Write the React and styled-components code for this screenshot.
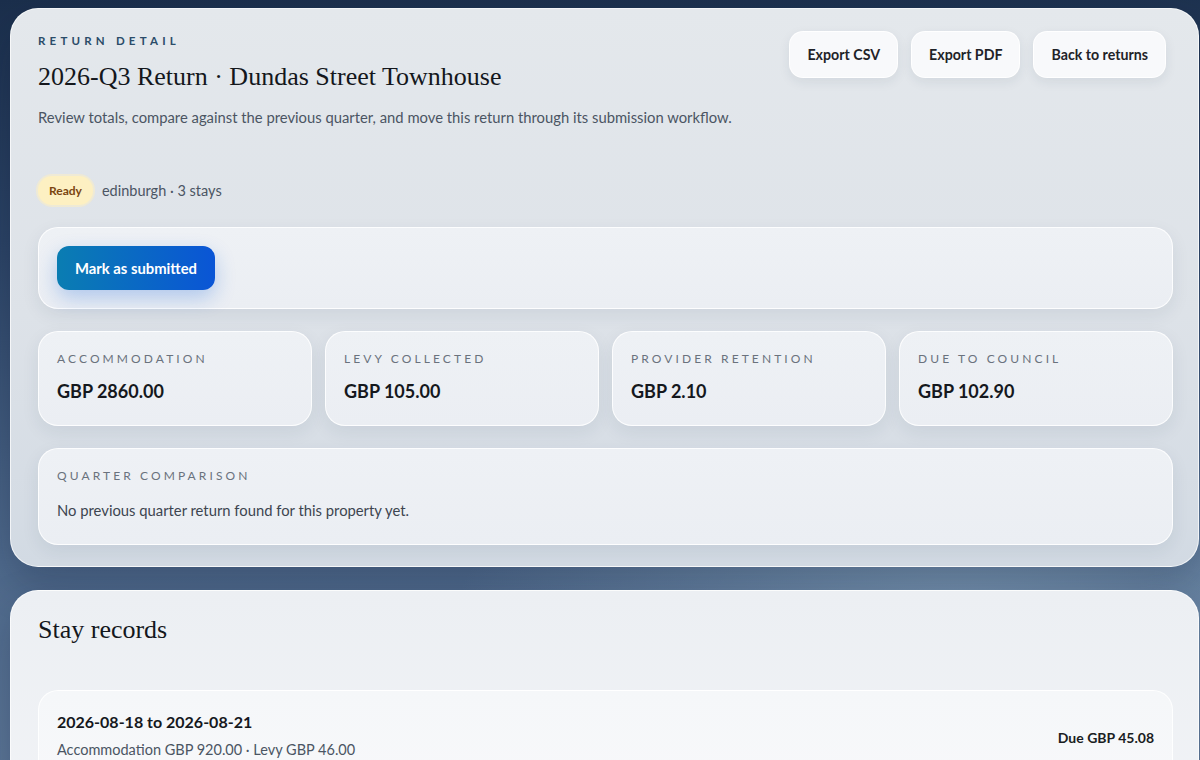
import React from 'react'
import styled, { createGlobalStyle } from 'styled-components'

const GlobalStyle = createGlobalStyle`
    html, body {
        margin: 0;
        padding: 0;
    }
    body {
        font-family: Lato, "Noto Sans", sans-serif;
        background:
            radial-gradient(ellipse 720px 260px at 960px 610px, rgba(140, 170, 195, 0.7), transparent 70%),
            linear-gradient(178deg, #1b2f4c 0%, #2b4365 30%, #4f6a8c 70%, #5e7898 100%);
        height: 760px;
        overflow: hidden;
    }
`

const Page = styled.main`
    display: flex;
    flex-direction: column;
    gap: 23px;
    padding: 8px 1px 0 10px;
`

const Panel = styled.section`
    border-radius: 28px;
    padding: ${(p) => p.$pad || '22px 25px 21px 27px'};
    background: ${(p) => p.$light
        ? 'linear-gradient(180deg, #eceff3 0%, #f1f3f6 100%)'
        : 'linear-gradient(180deg, #e4e8ec 0%, #dde2e8 55%, #d2dae3 100%)'};
    border: 1px solid rgba(255, 255, 255, 0.7);
    box-shadow: 0 18px 40px rgba(10, 25, 50, 0.25);
    display: flex;
    flex-direction: column;
    gap: 22px;
`

const Header = styled.header`
    display: flex;
    justify-content: space-between;
    align-items: flex-start;
`

const Eyebrow = styled.div`
    font-size: 11.5px;
    font-weight: 700;
    letter-spacing: 4.2px;
    color: #2b4c69;
    margin-top: 3px;
`

const Title = styled.h1`
    font-family: "Liberation Serif", "DejaVu Serif", serif;
    font-size: 26px;
    font-weight: 400;
    color: #14171c;
    margin: 15px 0 0;
`

const Lead = styled.p`
    font-size: 14.8px;
    color: #4b5563;
    margin: 16px 0 0;
`

const Actions = styled.div`
    display: flex;
    gap: 13px;
    padding-right: 7px;
`

const GhostButton = styled.button`
    font-family: inherit;
    font-size: 14.2px;
    font-weight: 700;
    color: #1f2328;
    background: #f8f9fb;
    border: 1px solid rgba(255, 255, 255, 0.9);
    border-radius: 14px;
    height: 47px;
    padding: 0 17px;
    box-shadow: 0 4px 12px rgba(30, 50, 80, 0.08);
`

const Meta = styled.div`
    display: flex;
    align-items: center;
    gap: 9px;
    margin-top: 50px;
    font-size: 14.5px;
    color: #4b5563;
`

const Badge = styled.span`
    background: #fdf0c2;
    color: #7a4510;
    font-size: 12px;
    font-weight: 700;
    border-radius: 14px;
    padding: 7px 11px;
    box-shadow: 0 0 0 2px rgba(253, 240, 194, 0.5);
`

const Card = styled.div`
    background: linear-gradient(180deg, #eef1f5 0%, #ebeef3 100%);
    border: 1px solid rgba(255, 255, 255, 0.85);
    border-radius: 20px;
    box-shadow: 0 6px 18px rgba(30, 50, 80, 0.08);
    padding: ${(p) => p.$pad || '18px 18px'};
`

const PrimaryButton = styled.button`
    font-family: inherit;
    font-size: 14.8px;
    font-weight: 700;
    color: #ffffff;
    background: linear-gradient(90deg, #0a7db2 0%, #0a55d6 100%);
    border: none;
    border-radius: 12px;
    height: 44px;
    padding: 0 18px;
    box-shadow: 0 8px 20px rgba(20, 100, 220, 0.28);
`

const StatGrid = styled.div`
    display: grid;
    grid-template-columns: repeat(4, 1fr);
    gap: 13px;
`

const Label = styled.div`
    font-size: 12px;
    letter-spacing: 3.1px;
    color: #6a727d;
    text-transform: uppercase;
`

const Value = styled.div`
    font-size: 18px;
    font-weight: 700;
    color: #15181d;
    margin-top: 14px;
`

const Note = styled.p`
    font-size: 14.8px;
    color: #3d4550;
    margin: 18px 0 0;
`

const SectionTitle = styled.h2`
    font-family: "Liberation Serif", "DejaVu Serif", serif;
    font-size: 26px;
    font-weight: 400;
    color: #14171c;
    margin: 0 0 45px;
`

const StayRow = styled.div`
    display: flex;
    justify-content: space-between;
    align-items: center;
    background: linear-gradient(180deg, #f5f7f9 0%, #f7f8fa 100%);
    border: 1px solid rgba(255, 255, 255, 0.9);
    border-radius: 20px;
    padding: 21px 18px 21px 18px;
    margin-top: -22px;
`

const StayDates = styled.div`
    font-size: 16px;
    font-weight: 700;
    color: #15181d;
`

const StaySub = styled.div`
    font-size: 14.5px;
    color: #4b5563;
    margin-top: 10px;
`

const Due = styled.div`
    font-size: 14px;
    font-weight: 700;
    color: #1a1d22;
    margin-top: 4px;
`

const stats = [
    { label: 'Accommodation', value: 'GBP 2860.00' },
    { label: 'Levy collected', value: 'GBP 105.00' },
    { label: 'Provider retention', value: 'GBP 2.10' },
    { label: 'Due to council', value: 'GBP 102.90' },
]

export default function App() {
    return (
        <>
            <GlobalStyle />
            <Page>
                <Panel>
                    <div>
                        <Header>
                            <div>
                                <Eyebrow>RETURN DETAIL</Eyebrow>
                                <Title>2026-Q3 Return · Dundas Street Townhouse</Title>
                                <Lead>Review totals, compare against the previous quarter, and move this return through its submission workflow.</Lead>
                            </div>
                            <Actions>
                                <GhostButton>Export CSV</GhostButton>
                                <GhostButton>Export PDF</GhostButton>
                                <GhostButton>Back to returns</GhostButton>
                            </Actions>
                        </Header>
                        <Meta>
                            <Badge>Ready</Badge>
                            <span>edinburgh · 3 stays</span>
                        </Meta>
                    </div>
                    <Card>
                        <PrimaryButton>Mark as submitted</PrimaryButton>
                    </Card>
                    <StatGrid>
                        {stats.map((s) => (
                            <Card key={s.label} $pad="19px 18px 23px">
                                <Label>{s.label}</Label>
                                <Value>{s.value}</Value>
                            </Card>
                        ))}
                    </StatGrid>
                    <Card $pad="19px 18px 25px">
                        <Label>Quarter comparison</Label>
                        <Note>No previous quarter return found for this property yet.</Note>
                    </Card>
                </Panel>
                <Panel $light $pad="24px 25px 40px 27px">
                    <SectionTitle>Stay records</SectionTitle>
                    <StayRow>
                        <div>
                            <StayDates>2026-08-18 to 2026-08-21</StayDates>
                            <StaySub>Accommodation GBP 920.00 · Levy GBP 46.00</StaySub>
                        </div>
                        <Due>Due GBP 45.08</Due>
                    </StayRow>
                </Panel>
            </Page>
        </>
    )
}
